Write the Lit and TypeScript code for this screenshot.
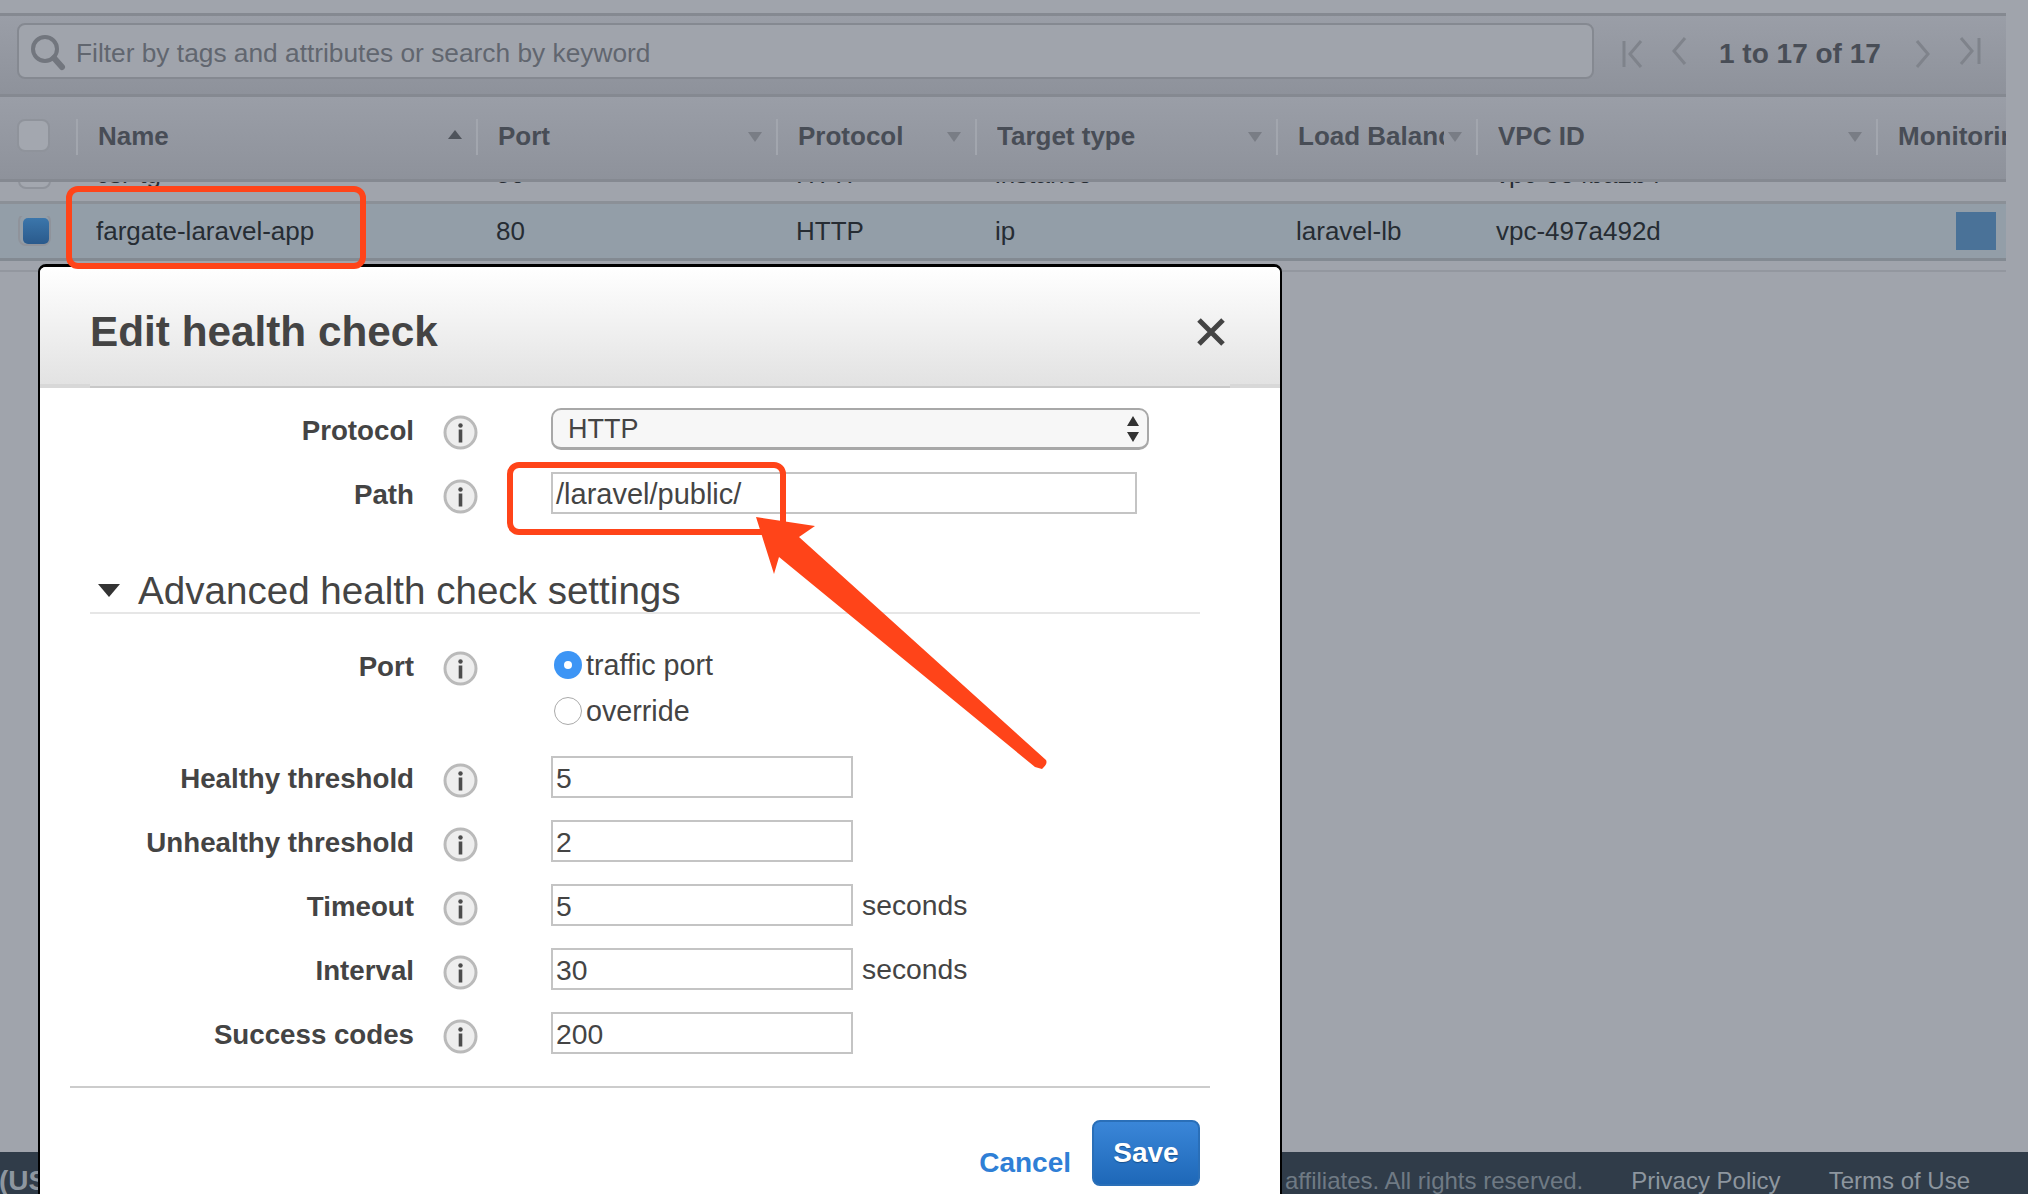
import { LitElement, html, css, svg } from "lit";
import { customElement } from "lit/decorators.js";

const COLS = "76px 400px 300px 199px 301px 200px 400px 130px";

const infoIcon = html`<svg class="info" width="35" height="35" viewBox="0 0 35 35">
  <circle cx="17.5" cy="17.5" r="15.5" fill="#eeeeee" stroke="#bababa" stroke-width="3"></circle>
  <circle cx="17.5" cy="10.5" r="2.2" fill="#4d4d4d"></circle>
  <rect x="15.7" y="14.5" width="3.6" height="13" fill="#4d4d4d"></rect>
</svg>`;

const pagerIcon = (d: string, w: number) => html`<svg width=${w} height="28" viewBox="0 0 ${w} 28" fill="none" stroke="#7f838b" stroke-width="3">${svg`<path d=${d}></path>`}</svg>`;

@customElement("app-root")
export class AppRoot extends LitElement {
  static styles = css`
    :host {
      display: block;
      box-sizing: border-box;
      position: relative;
      width: 2028px;
      height: 1194px;
      overflow: hidden;
      background: #a0a4ac;
      font-family: "Liberation Sans", Arial, sans-serif;
      font-size: 26px;
    }

    *, *:before, *:after {
      box-sizing: inherit;
    }

    .page {
      display: flex;
      flex-direction: column;
      height: 1194px;
    }

    .console {
      width: 2006px;
      margin-top: 13px;
      overflow: hidden;
    }

    .filter-bar {
      display: flex;
      align-items: center;
      height: 84px;
      padding-left: 17px;
      border-top: 3px solid #858991;
      border-bottom: 3px solid #858991;
      background: linear-gradient(#9a9ea7, #8e929b);
    }

    .filter-input {
      display: flex;
      align-items: center;
      flex: none;
      width: 1577px;
      height: 56px;
      margin-top: -8px;
      padding: 4px 0 0 10px;
      border: 2px solid #858991;
      border-radius: 8px;
      background: #a0a4ac;
      color: #61666f;
      font-size: 26.3px;
    }

    .filter-input svg {
      margin-right: 9px;
    }

    .pager {
      display: flex;
      align-items: center;
      margin: -2px 0 0 28px;
      color: #484d56;
      font-size: 28px;
      font-weight: 700;
    }

    .pager span {
      margin: 0 34px 0 32px;
      white-space: nowrap;
    }

    .pager .sp {
      margin-left: 28px;
    }

    .table-head {
      display: grid;
      grid-template-columns: ${css([COLS] as any)};
      align-items: center;
      height: 85px;
      padding-bottom: 3px;
      border-bottom: 3px solid #858991;
      background: linear-gradient(#9a9ea7, #8e929b);
      color: #484d56;
      font-weight: 700;
    }

    .th {
      display: flex;
      align-items: center;
      height: 36px;
      padding: 0 14px 0 20px;
      border-left: 2px solid #a2a6ae;
      overflow: hidden;
    }

    .th b {
      flex: 1;
      overflow: hidden;
      white-space: nowrap;
    }

    .th.wide {
      overflow: visible;
    }

    .th.wide b {
      overflow: visible;
    }

    .down, .up {
      flex: none;
      width: 0;
      height: 0;
      border-left: 7px solid transparent;
      border-right: 7px solid transparent;
    }

    .down {
      margin-left: 4px;
      border-top: 10px solid #797d85;
    }

    .up {
      margin-top: -4px;
      border-bottom: 9px solid #4f545c;
    }

    .check-cell {
      padding-left: 17px;
    }

    .checkbox {
      display: flex;
      align-items: center;
      justify-content: center;
      width: 33px;
      height: 33px;
      margin-top: -3px;
      border: 2px solid #8f939b;
      border-radius: 8px;
      background: #a3a7af;
    }

    .checkbox.on i {
      display: block;
      width: 26px;
      height: 26px;
      margin: 3px 0 0 3px;
      border-radius: 5px;
      background: linear-gradient(#3b76ab, #2a5a8c);
    }

    .table-body {
      height: 90px;
      border-bottom: 2px solid #93979f;
      overflow: hidden;
    }

    .row {
      display: grid;
      grid-template-columns: ${css([COLS] as any)};
      align-items: center;
      height: 57px;
      border-bottom: 3px solid #8b9097;
      color: #262c33;
    }

    .row.clipped {
      margin-top: -35px;
    }

    .row.selected {
      background: #939ea8;
      border-bottom-color: #838a92;
    }

    .td {
      padding-left: 20px;
      white-space: nowrap;
      overflow: hidden;
    }

    .td.check-cell {
      padding-left: 18px;
    }

    .selected .check-cell .checkbox {
      background: #939ea8;
    }

    .monitor {
      width: 40px;
      height: 40px;
      margin: -2px 0 0 60px;
      background: #4a7298;
    }

    .footer {
      display: flex;
      justify-content: space-between;
      align-items: center;
      flex: none;
      height: 42px;
      margin-top: auto;
      padding: 16px 58px 0 0;
      background: #303c49;
      color: #6f7a84;
      font-size: 24px;
      white-space: nowrap;
    }

    .lang {
      margin-left: -110px;
      color: #8d969f;
      font-size: 28px;
      font-weight: 700;
    }

    .legal {
      display: flex;
      gap: 48px;
    }

    .legal a {
      color: #8d969f;
    }

    .modal {
      position: absolute;
      top: 264px;
      left: 38px;
      width: 1244px;
      height: 960px;
      border: 2px solid #000;
      border-top-width: 3px;
      border-radius: 8px;
      background: #fff;
      color: #444;
      font-size: 28.3px;
    }

    .modal-head {
      position: relative;
      display: flex;
      align-items: center;
      height: 121px;
      padding: 10px 55px 0 50px;
      border-bottom: 2px solid #c8c8c8;
      border-radius: 6px 6px 0 0;
      background: linear-gradient(#ffffff, #e2e2e2);
    }

    .modal-head:before, .modal-head:after {
      content: "";
      position: absolute;
      bottom: -2px;
      width: 50px;
      height: 4px;
      background: #d8d8d8;
    }

    .modal-head:before {
      left: 0;
    }

    .modal-head:after {
      right: 0;
    }

    h1 {
      flex: 1;
      margin: 0;
      font-size: 42.3px;
      line-height: 50px;
      font-weight: 700;
    }

    .modal-body {
      padding-top: 20px;
    }

    .field {
      display: grid;
      grid-template-columns: 374px 137px 1fr;
      align-items: center;
      line-height: 42px;
    }

    .field + .field {
      margin-top: 22px;
    }

    .field label {
      padding-top: 3px;
      line-height: 39px;
      text-align: right;
      font-size: 27.7px;
      font-weight: 700;
    }

    .info {
      display: block;
      margin: 7px 0 0 29px;
    }

    .select {
      display: flex;
      align-items: center;
      justify-content: space-between;
      width: 598px;
      height: 42px;
      padding: 0 8px 0 15px;
      border: 2px solid #a8a8a8;
      border-bottom-width: 3px;
      border-radius: 10px;
      background: #f7f7f7;
      font-size: 27px;
    }

    .select svg {
      display: block;
    }

    .input {
      width: 302px;
      height: 42px;
      padding-left: 3px;
      border: 2px solid #c4c4c4;
      line-height: 40px;
    }

    .input.long {
      width: 586px;
      font-size: 29px;
    }

    .control {
      display: flex;
      align-items: center;
      gap: 9px;
    }

    .section {
      display: flex;
      align-items: center;
      height: 46px;
      margin: 54px 80px 0 50px;
      padding: 2px 0 0 8px;
      border-bottom: 2px solid #e6e6e6;
      font-size: 38.6px;
      line-height: 44px;
    }

    .section i {
      width: 0;
      height: 0;
      margin: -2px 18px 0 0;
      border-left: 11px solid transparent;
      border-right: 11px solid transparent;
      border-top: 13px solid #333;
    }

    .port {
      align-items: start;
      margin-top: 30px;
    }

    .port .info {
      margin-top: 7px;
    }

    .radios {
      display: flex;
      flex-direction: column;
      gap: 4px;
      padding-left: 3px;
      font-size: 28.7px;
    }

    .radio {
      display: flex;
      align-items: center;
      gap: 4px;
    }

    .radio i {
      display: flex;
      align-items: center;
      justify-content: center;
      width: 28px;
      height: 28px;
      border: 1.5px solid #aaa;
      border-radius: 50%;
      background: #fff;
    }

    .radio.on i {
      border: none;
      background: #3d95f5;
    }

    .radio.on i:after {
      content: "";
      width: 8px;
      height: 8px;
      border-radius: 50%;
      background: #fff;
    }

    .thresholds {
      margin-top: 24px;
    }

    .divider {
      height: 2px;
      margin: 32px 70px 0 30px;
      background: #cccccc;
    }

    .actions {
      display: flex;
      justify-content: flex-end;
      gap: 21px;
      margin: 32px 80px 0 0;
      font-size: 28px;
      font-weight: 700;
    }

    .cancel {
      align-self: center;
      padding-top: 20px;
      color: #2f7fd6;
    }

    .save {
      width: 108px;
      height: 66px;
      border: 2px solid #2a6fb8;
      border-radius: 8px;
      background: linear-gradient(#3a86d8, #1e68b8);
      color: #fff;
      line-height: 62px;
      text-align: center;
      text-shadow: 0 1px 1px #174f8c;
    }

    .marks {
      position: absolute;
      top: 0;
      left: 0;
      pointer-events: none;
    }
  `;

  private field(name: string, value: string, unit = "") {
    return html`<div class="field">
      <label>${name}</label>
      ${infoIcon}
      <div class="control">
        <div class="input">${value}</div>
        ${unit ? html`<span>${unit}</span>` : ""}
      </div>
    </div>`;
  }

  private th(name: string, arrow = "down") {
    return html`<div class="th"><b>${name}</b><div class=${arrow}></div></div>`;
  }

  render() {
    return html`
      <div class="page">
        <div class="console">
          <div class="filter-bar">
            <div class="filter-input">
              <svg width="38" height="38" viewBox="0 0 38 38" fill="none" stroke="#72767e">
                <circle cx="16" cy="15" r="12" stroke-width="4"></circle>
                <path d="M25 24 L33 33" stroke-width="6" stroke-linecap="round"></path>
              </svg>
              Filter by tags and attributes or search by keyword
            </div>
            <div class="pager">
              ${pagerIcon("M2 1 V27 M19 1 L8 14 L19 27", 21)}
              <div class="sp">${pagerIcon("M14 1 L3 14 L14 27", 16)}</div>
              <span>1 to 17 of 17</span>
              ${pagerIcon("M2 1 L13 14 L2 27", 16)}
              <div class="sp">${pagerIcon("M2 1 L13 14 L2 27 M20 1 V27", 22)}</div>
            </div>
          </div>
          <div class="table-head">
            <div class="check-cell"><div class="checkbox"></div></div>
            ${this.th("Name", "up")}
            ${this.th("Port")}
            ${this.th("Protocol")}
            ${this.th("Target type")}
            ${this.th("Load Balancer")}
            ${this.th("VPC ID")}
            <div class="th wide"><b>Monitoring</b></div>
          </div>
          <div class="table-body">
            <div class="row clipped">
              <div class="td check-cell"><div class="checkbox"></div></div>
              <div class="td">csr-tg</div>
              <div class="td">80</div>
              <div class="td">HTTP</div>
              <div class="td">instance</div>
              <div class="td"></div>
              <div class="td">vpc-3e4ba2b4</div>
              <div class="td"></div>
            </div>
            <div class="row selected">
              <div class="td check-cell"><div class="checkbox on"><i></i></div></div>
              <div class="td">fargate-laravel-app</div>
              <div class="td">80</div>
              <div class="td">HTTP</div>
              <div class="td">ip</div>
              <div class="td">laravel-lb</div>
              <div class="td">vpc-497a492d</div>
              <div class="td"><div class="monitor"></div></div>
            </div>
          </div>
        </div>
        <div class="footer">
          <div class="lang">English (US)</div>
          <div class="legal">
            <div>© 2008 - 2018, Amazon Web Services, Inc. or its affiliates. All rights reserved.</div>
            <a>Privacy Policy</a>
            <a>Terms of Use</a>
          </div>
        </div>
      </div>

      <div class="modal">
        <div class="modal-head">
          <h1>Edit health check</h1>
          <svg width="28" height="28" viewBox="0 0 28 28" stroke="#444" stroke-width="5">
            <path d="M2 2 L26 26 M26 2 L2 26"></path>
          </svg>
        </div>
        <div class="modal-body">
          <div class="field">
            <label>Protocol</label>
            ${infoIcon}
            <div class="select">
              HTTP
              <svg width="12" height="28" viewBox="0 0 12 28" fill="#333">
                <path d="M6 1 L12 11 H0 Z M0 17 H12 L6 27 Z"></path>
              </svg>
            </div>
          </div>
          <div class="field">
            <label>Path</label>
            ${infoIcon}
            <div class="input long">/laravel/public/</div>
          </div>

          <div class="section"><i></i>Advanced health check settings</div>

          <div class="field port">
            <label>Port</label>
            ${infoIcon}
            <div class="radios">
              <div class="radio on"><i></i>traffic port</div>
              <div class="radio"><i></i>override</div>
            </div>
          </div>

          <div class="thresholds">
            ${this.field("Healthy threshold", "5")}
            ${this.field("Unhealthy threshold", "2")}
            ${this.field("Timeout", "5", "seconds")}
            ${this.field("Interval", "30", "seconds")}
            ${this.field("Success codes", "200")}
          </div>

          <div class="divider"></div>
          <div class="actions">
            <div class="cancel">Cancel</div>
            <div class="save">Save</div>
          </div>
        </div>
      </div>

      <svg class="marks" width="2028" height="1194" viewBox="0 0 2028 1194" fill="none">
        <rect x="69" y="189" width="294" height="77" rx="9" stroke="#ff4419" stroke-width="6"></rect>
        <rect x="510" y="465" width="273" height="67" rx="9" stroke="#ff4419" stroke-width="6"></rect>
        <path d="M756 517 L815 526 L799 537 L1046 760 Q1048 764 1042 769 L1035 767 L779 557 L774 574 Z" fill="#ff4419"></path>
      </svg>
    `;
  }
}
